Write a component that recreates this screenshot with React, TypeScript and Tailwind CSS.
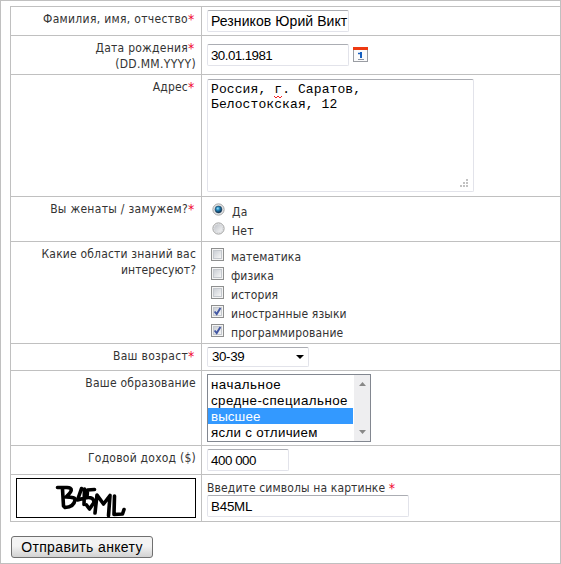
import type { ReactNode } from "react";

const labelFont = "font-['DejaVu_Sans_Condensed','DejaVu_Sans',sans-serif] [font-stretch:condensed]";
const fieldFont = "font-['Liberation_Sans',Arial,sans-serif]";

function Star() {
  return <span className="inline-block h-4 w-[8px] text-left align-top text-[14px] leading-4 tracking-normal text-[#f0002c]">*</span>;
}

function Row({ h, label, children }: { h: string; label: ReactNode; children: ReactNode }) {
  return (
    <div className={`flex ${h} box-border border-b border-[#c0c0c0]`}>
      <div className="w-[191px] shrink-0 border-r border-[#c0c0c0] pt-1 pr-[5px] text-right whitespace-nowrap">
        {label}
      </div>
      <div className="grow pl-[5px]">{children}</div>
    </div>
  );
}

function Field({ value, className }: { value: string; className: string }) {
  return (
    <div
      className={`${fieldFont} ${className} h-[22px] overflow-hidden rounded-[2px] border border-[#e2e3ea] border-t-[#abadb3] bg-white pl-[3px] leading-[21px] whitespace-nowrap text-black`}
    >
      {value}
    </div>
  );
}

function Radio({ on = false }: { on?: boolean }) {
  return (
    <svg width="13" height="13" viewBox="0 0 13 13">
      <defs>
        <linearGradient id="radioGrey" x1="0" y1="0" x2="1" y2="1">
          <stop offset="0" stopColor="#bfc2c8" />
          <stop offset="1" stopColor="#f8f8f8" />
        </linearGradient>
        <radialGradient id="radioBlue" cx=".4" cy=".35" r=".65">
          <stop offset="0" stopColor="#9be4fb" />
          <stop offset=".4" stopColor="#2387bd" />
          <stop offset="1" stopColor="#0b2c4c" />
        </radialGradient>
      </defs>
      <circle cx="6.5" cy="6.5" r="5.6" fill="#f6f6f6" stroke="#9b9c9c" />
      <circle cx="6.5" cy="6.5" r="4.1" fill="url(#radioGrey)" stroke="#c6cacf" strokeWidth=".6" />
      {on && <circle cx="6.5" cy="6.5" r="3.4" fill="url(#radioBlue)" stroke="#173a57" strokeWidth=".5" />}
    </svg>
  );
}

function Check({ on }: { on: boolean }) {
  return (
    <span className="flex size-[13px] items-center justify-center border border-[#8e8f8f] bg-[#f4f4f4]">
      <span className="flex size-[9px] items-center justify-center border border-[#c4c8cd] bg-linear-to-br from-[#cbcfd5] to-[#f6f6f6]">
        {on && (
          <svg width="9" height="9" viewBox="0 0 9 9" className="shrink-0">
            <path d="M1.6 4.5 3.7 7.1 7.4 1" fill="none" stroke="#4357a3" strokeWidth="1.9" />
          </svg>
        )}
      </span>
    </span>
  );
}

function Calendar() {
  return (
    <svg width="15" height="15" viewBox="0 0 15 15" className="mt-[3px] ml-1">
      <rect x=".5" y=".5" width="14" height="14" fill="#fbfbfb" stroke="#9a9da3" />
      <rect x="0" y="0" width="15" height="3" fill="#ee3a12" />
      <path d="M5 6.500h2.500" fill="none" stroke="#155fc0" strokeWidth="1.500" />
      <path d="M8 5v6" fill="none" stroke="#155fc0" strokeWidth="2" />
      <path d="M5 12.500h6" stroke="#8a93a3" />
    </svg>
  );
}

const topics: [string, boolean][] = [
  ["математика", false],
  ["физика", false],
  ["история", false],
  ["иностранные языки", true],
  ["программирование", true],
];

const levels: [string, string][] = [
  ["начальное", "tracking-[0.5px]"],
  ["средне-специальное", "tracking-[0.45px]"],
  ["высшее", "tracking-[0.1px]"],
  ["ясли с отличием", "tracking-[0.3px]"],
];

export default function App() {
  return (
    <div
      className={`${labelFont} h-[564px] w-[561px] border border-[#c0c0c0] bg-white pt-[5px] pl-[9px] text-[12px] leading-4 text-[#333]`}
    >
      <div className="border-t border-l border-[#c0c0c0]">
        <Row h="h-[29px]" label={<span className="tracking-[0.32px]">Фамилия, имя, отчество<Star /></span>}>
          <Field value="Резников Юрий Викт" className="mt-[3px] w-[142px] text-[14px] tracking-[0.08px]" />
        </Row>
        <Row
          h="h-[39px]"
          label={
            <>
              <div className="h-4 tracking-[0.25px]">Дата рождения<Star /></div>
              <div className="tracking-[0.33px]">(DD.MM.YYYY)</div>
            </>
          }
        >
          <div className="flex pt-2">
            <Field value="30.01.1981" className="w-[142px] text-[13.33px] tracking-[-0.55px]" />
            <Calendar />
          </div>
        </Row>
        <Row h="h-[122px]" label={<span className="tracking-[0.2px]">Адрес<Star /></span>}>
          <div className="mt-1 flex h-[113px] w-[267px] flex-col justify-between rounded-[2px] border border-[#e2e3ea] border-t-[#abadb3] pt-[2px] pl-[3px] font-['Liberation_Mono','Courier_New',monospace] text-[13px] leading-[15px] tracking-[0.1px] text-black">
            <div>
              Россия,{" "}
              <span className="relative">
                г
                <svg width="8" height="4" viewBox="0 0 8 4" className="absolute bottom-[-2px] left-0">
                  <path d="M0 1 2 3 4 1 6 3 8 1" fill="none" stroke="#f02020" />
                </svg>
              </span>
              . Саратов,
              <br />
              Белостокская, 12
            </div>
            <svg width="8" height="8" viewBox="0 0 8 8" className="mr-[5px] mb-[4px] self-end" fill="#c2c2c2">
              <path d="M6 0h2v2H6zM3 3h2v2H3zM6 3h2v2H6zM0 6h2v2H0zM3 6h2v2H3zM6 6h2v2H6z" />
            </svg>
          </div>
        </Row>
        <Row h="h-[45px]" label={<span className="tracking-[0.3px]">Вы женаты / замужем?<Star /></span>}>
          <div className="pt-[6px] pl-[5px]">
            <div className="flex h-[19px] gap-[7px]"><Radio on /><span className="pt-px tracking-[0.3px]">Да</span></div>
            <div className="flex h-[19px] gap-[7px]"><Radio /><span className="pt-px tracking-[0.2px]">Нет</span></div>
          </div>
        </Row>
        <Row
          h="h-[102px]"
          label={
            <>
              <div className="tracking-[0.18px]">Какие области знаний вас</div>
              <div className="tracking-[0.1px]">интересуют?</div>
            </>
          }
        >
          <div className="pt-[6px] pl-[4px] tracking-[0.14px]">
            {topics.map(([name, on]) => (
              <div key={name} className="flex h-[19px] gap-[7px]">
                <Check on={on} />
                <span className="pt-px">{name}</span>
              </div>
            ))}
          </div>
        </Row>
        <Row h="h-[27px]" label={<span className="tracking-[0.3px]">Ваш возраст<Star /></span>}>
          <div className={`${fieldFont} mt-[3px] flex h-5 w-[102px] items-center justify-between rounded-[2px] border border-[#e2e3ea] border-t-[#abadb3] pr-1 pl-1 text-[13.33px] tracking-[-0.35px] text-black`}>
            30-39
            <svg width="8" height="4" viewBox="0 0 8 4"><path d="M0 0h8L4 4z" /></svg>
          </div>
        </Row>
        <Row h="h-[75px]" label={<span className="tracking-[0.25px]">Ваше образование</span>}>
          <div className={`${fieldFont} mt-[3px] flex h-[68px] w-[164px] border border-[#828790] py-px text-[13.33px] leading-[18px] text-black`}>
            <div className="w-[145px]">
              {levels.map(([name, spacing]) => (
                <div
                  key={name}
                  className={`h-4 pl-[3px] ${spacing} ${name === "высшее" ? "bg-[#3399ff] text-white" : ""}`}
                >
                  {name}
                </div>
              ))}
            </div>
            <div className="-my-px ml-px flex w-4 flex-col items-center justify-between bg-[#eeeef0] py-[7px]">
              <svg width="7" height="4" viewBox="0 0 7 4" fill="#888"><path d="M0 4h7L3.5 0z" /></svg>
              <svg width="7" height="4" viewBox="0 0 7 4" fill="#888"><path d="M0 0h7L3.5 4z" /></svg>
            </div>
          </div>
        </Row>
        <Row h="h-[29px]" label={<span className="tracking-[0.24px]">Годовой доход ($)</span>}>
          <Field value="400 000" className="mt-[3px] w-[82px] text-[13.33px] tracking-[-0.45px]" />
        </Row>
        <Row
          h="h-[47px]"
          label={
            <div className="-mt-px ml-[5px] h-10 w-[180px] border border-black">
              <svg width="178" height="38" viewBox="17 479 178 38" fill="none" stroke="#000" strokeWidth="3.6" strokeLinecap="round" strokeLinejoin="round">
                <path d="M57.5 487.5 67 487.5Q76 488 66 497Q76 497 75 500Q74 507 65 507.5L63.5 506 62.5 489" />
                <path d="M81.5 488.5 77.5 500 87 497.5M84.5 489 84 504.5" />
                <path d="M94.5 489.5 87.5 490 87 497.5Q94 497 94 502.5L89.5 509 86.5 505" />
                <path d="M95 513 97 495 103.5 504 110 495.5 108.5 515.5" />
                <path d="M114.5 496 114 514.5 122.5 514 124 509.5" />
              </svg>
            </div>
          }
        >
          <div className="h-5 pt-[5px] tracking-[0.13px]">Введите символы на картинке <Star /></div>
          <Field value="B45ML" className="w-[202px] text-[13.33px] tracking-[-0.2px]" />
        </Row>
      </div>
      <button
        className={`${fieldFont} mt-[14px] ml-px block h-[22px] w-[142px] rounded-[3px] border border-[#707070] bg-linear-to-b from-[#f3f3f3] from-45% to-[#d2d2d2] text-[14px] leading-[21px] tracking-[0.35px] whitespace-nowrap text-black`}
      >
        Отправить анкету
      </button>
    </div>
  );
}
